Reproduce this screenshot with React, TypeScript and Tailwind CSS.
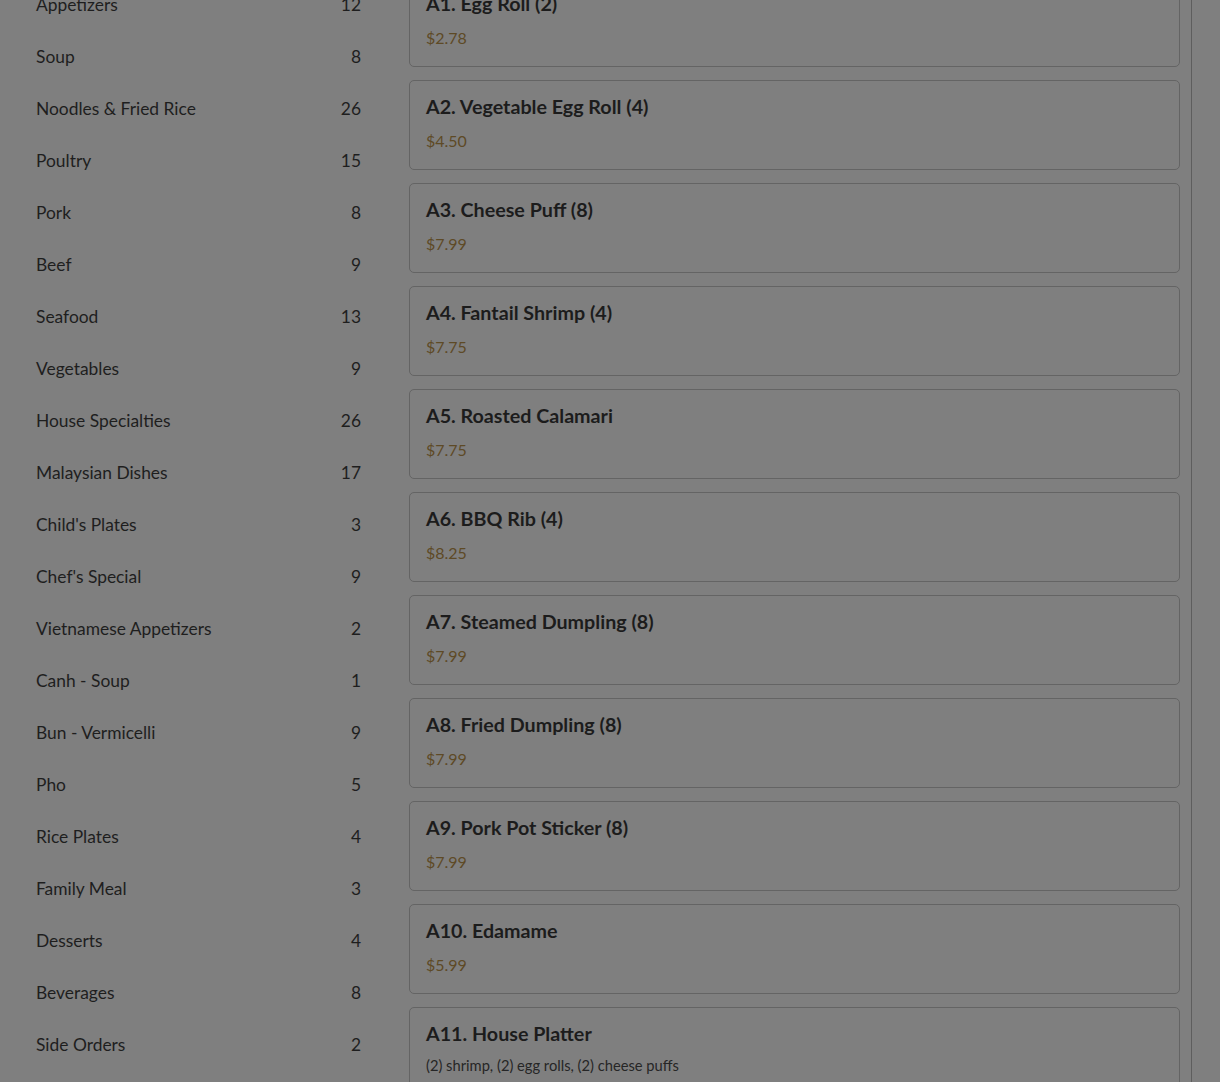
import React from "react";

const cats: [string, number][] = [
  ["Appetizers", 12],
  ["Soup", 8],
  ["Noodles & Fried Rice", 26],
  ["Poultry", 15],
  ["Pork", 8],
  ["Beef", 9],
  ["Seafood", 13],
  ["Vegetables", 9],
  ["House Specialties", 26],
  ["Malaysian Dishes", 17],
  ["Child's Plates", 3],
  ["Chef's Special", 9],
  ["Vietnamese Appetizers", 2],
  ["Canh - Soup", 1],
  ["Bun - Vermicelli", 9],
  ["Pho", 5],
  ["Rice Plates", 4],
  ["Family Meal", 3],
  ["Desserts", 4],
  ["Beverages", 8],
  ["Side Orders", 2],
];

const items: { name: string; price: string; desc?: string }[] = [
  { name: "A1. Egg Roll (2)", price: "$2.78" },
  { name: "A2. Vegetable Egg Roll (4)", price: "$4.50" },
  { name: "A3. Cheese Puff (8)", price: "$7.99" },
  { name: "A4. Fantail Shrimp (4)", price: "$7.75" },
  { name: "A5. Roasted Calamari", price: "$7.75" },
  { name: "A6. BBQ Rib (4)", price: "$8.25" },
  { name: "A7. Steamed Dumpling (8)", price: "$7.99" },
  { name: "A8. Fried Dumpling (8)", price: "$7.99" },
  { name: "A9. Pork Pot Sticker (8)", price: "$7.99" },
  { name: "A10. Edamame", price: "$5.99" },
  { name: "A11. House Platter", price: "$12.99", desc: "(2) shrimp, (2) egg rolls, (2) cheese puffs" },
];

export default function App() {
  return (
    <div
      className="h-[1082px] w-[1220px] overflow-hidden bg-[#7f7f7f] text-[#1e1e1e]"
      style={{ fontFamily: "Lato, 'Noto Sans', sans-serif" }}
    >
      <div className="-mt-[22px] flex items-start">
        <div className="mt-[1px] ml-[36px] w-[325px] shrink-0">
          {cats.map(([n, c]) => (
            <div key={n} className="flex h-[52px] items-center justify-between text-[17.4px]">
              <span>{n}</span>
              <span>{c}</span>
            </div>
          ))}
        </div>
        <div className="-mt-[1px] ml-[48px] flex w-[783px] flex-col gap-[13px] border-r border-[#5e5e5e] pr-[11px]">
          {items.map((it) => (
            <div
              key={it.name}
              className="flex min-h-[90px] flex-col rounded-[5px] border border-[#646464] px-[16px] pt-[14px] pb-[15px]"
            >
              <div className="text-[19.7px] font-bold leading-[24px] text-[#1c1c1c]">{it.name}</div>
              {it.desc && (
                <div className="mt-[10px] text-[14.7px] leading-[18px] text-[#262626]">{it.desc}</div>
              )}
              <div className="mt-[12px] text-[16px] leading-[20px] text-[#5e4a26]">{it.price}</div>
            </div>
          ))}
        </div>
      </div>
    </div>
  );
}
